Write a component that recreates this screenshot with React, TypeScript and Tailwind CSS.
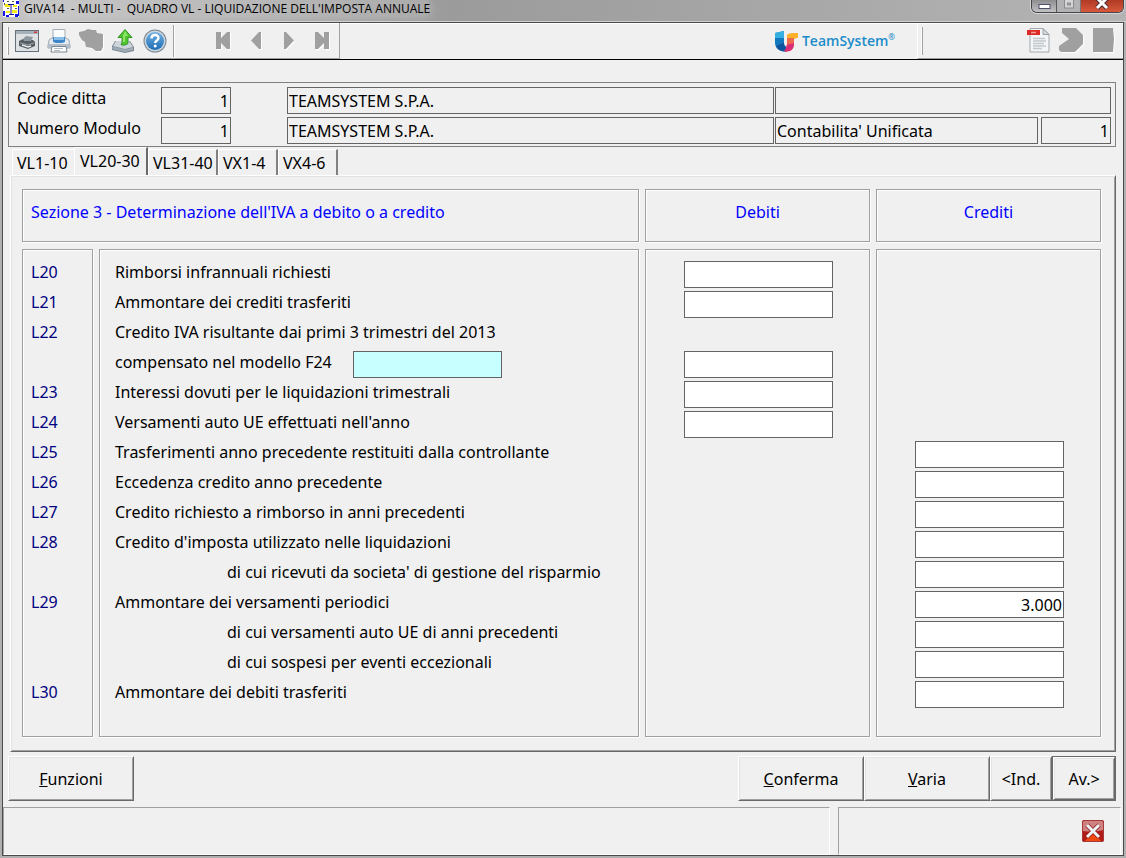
import { useState } from "react";
import type { ReactNode } from "react";

type Row = {
  id: string;
  code?: string;
  text: string;
  indent?: boolean;
  side?: "debiti" | "crediti";
  value?: string;
  extra?: boolean;
};

const rows: Row[] = [
  { id: "l20", code: "L20", text: "Rimborsi infrannuali richiesti", side: "debiti" },
  { id: "l21", code: "L21", text: "Ammontare dei crediti trasferiti", side: "debiti" },
  { id: "l22", code: "L22", text: "Credito IVA risultante dai primi 3 trimestri del 2013" },
  { id: "l22f24", text: "compensato nel modello F24", side: "debiti", extra: true },
  { id: "l23", code: "L23", text: "Interessi dovuti per le liquidazioni trimestrali", side: "debiti" },
  { id: "l24", code: "L24", text: "Versamenti auto UE effettuati nell'anno", side: "debiti" },
  { id: "l25", code: "L25", text: "Trasferimenti anno precedente restituiti dalla controllante", side: "crediti" },
  { id: "l26", code: "L26", text: "Eccedenza credito anno precedente", side: "crediti" },
  { id: "l27", code: "L27", text: "Credito richiesto a rimborso in anni precedenti", side: "crediti" },
  { id: "l28", code: "L28", text: "Credito d'imposta utilizzato nelle liquidazioni", side: "crediti" },
  { id: "l28a", text: "di cui ricevuti da societa' di gestione del risparmio", indent: true, side: "crediti" },
  { id: "l29", code: "L29", text: "Ammontare dei versamenti periodici", side: "crediti", value: "3.000" },
  { id: "l29a", text: "di cui versamenti auto UE di anni precedenti", indent: true, side: "crediti" },
  { id: "l29b", text: "di cui sospesi per eventi eccezionali", indent: true, side: "crediti" },
  { id: "l30", code: "L30", text: "Ammontare dei debiti trasferiti", side: "crediti" },
];

const tabs = [
  { name: "VL1-10", width: "w-[62px]" },
  { name: "VL20-30", width: "w-[74px]" },
  { name: "VL31-40", width: "w-[70px]" },
  { name: "VX1-4", width: "w-[60px]" },
  { name: "VX4-6", width: "w-[60px]" },
];

const box = "border border-[#a0a0a0] shadow-[1px_1px_0_#fff,inset_1px_1px_0_#fff]";
const raised =
  "border border-t-white border-l-white border-r-[#696969] border-b-[#696969] shadow-[inset_1px_1px_0_#e3e3e3,inset_-1px_-1px_0_#a0a0a0]";
const headField = "h-[27px] min-w-0 border border-[#646464] bg-transparent px-px outline-none";
const amount = "h-[27px] w-[149px] border border-[#646464] px-px text-right outline-none";

/* ---------- icons ---------- */

function PreviewIcon() {
  return (
    <svg width="24" height="24" viewBox="0 0 24 24">
      <rect x="0.5" y="1.5" width="23" height="21" fill="#dde1e4" stroke="#66727b" />
      <rect x="1" y="2" width="22" height="3" fill="#a5b1ba" />
      <rect x="19" y="2.500" width="3" height="1.500" fill="#d93a32" />
      <path d="M4 12l4-2 10 1 2 2v4l-7 3-9-3z" fill="#565e63" />
      <path d="M8 10l3-3 7 1-2 4-7 0z" fill="#8d989f" />
      <path d="M5 14l8 2 6-2" stroke="#9aa4aa" strokeWidth="1.200" fill="none" />
      <path d="M7 16l6 2 3-1" stroke="#e4e8ea" strokeWidth="1.400" fill="none" />
    </svg>
  );
}

function PrinterIcon() {
  return (
    <svg width="24" height="24" viewBox="0 0 24 24">
      <path d="M6 .5h12v10H6z" fill="#fafbfc" stroke="#a3adb5" />
      <path d="M2 11l3-2h14l3 2 1 8H1z" fill="#e6eaee" stroke="#9aa5af" />
      <path d="M6 8h12v5l-3 1H9l-3-1z" fill="#3e86cb" />
      <path d="M7 8h10v3H7z" fill="#8abde8" />
      <path d="M.5 15h23v4H.5z" fill="#b5bfc9" />
      <path d="M5 17.500h14l1 5.500H4z" fill="#fff" stroke="#7d8791" />
      <path d="M7 19.500h9M7 21.500h6" stroke="#b4bcc4" />
    </svg>
  );
}

function ExportIcon() {
  return (
    <svg width="24" height="24" viewBox="0 0 24 24">
      <path d="M4 12h15l4 6v4l-9 2-13-3v-4z" fill="#7d8a96" />
      <path d="M5 12h13l4 6-8 2-12-3z" fill="#cdd5da" />
      <path d="M1.500 17.500l12.500 3 8-2v2.500l-8 2-12.500-3z" fill="#9fabb5" />
      <path d="M14 .5l7 8h-4v6c-3 2-5 2-7 1l1-2v-5H7z" fill="#52c62e" stroke="#35942a" />
      <path d="M14 2l3 5h-3v6h-2V7z" fill="#8fe56a" />
    </svg>
  );
}

function HelpIcon() {
  return (
    <svg width="24" height="24" viewBox="0 0 24 24">
      <defs>
        <linearGradient id="help" x2="0" y2="1">
          <stop offset="0" stopColor="#73b2e4" />
          <stop offset="1" stopColor="#1c6cb4" />
        </linearGradient>
      </defs>
      <circle cx="12" cy="12" r="11.500" fill="#7c8791" />
      <circle cx="12" cy="12" r="10.500" fill="#c9d4dd" />
      <circle cx="12" cy="12" r="9" fill="url(#help)" />
      <path d="M8.500 9.500c0-4.500 7-4.500 7-.5 0 2.500-3.300 2.500-3.300 5" stroke="#fff" strokeWidth="2.400" fill="none" />
      <circle cx="12.200" cy="17" r="1.500" fill="#fff" />
    </svg>
  );
}

// grey glyphs of the disabled buttons: white copy behind, moved by one pixel
function Disabled({ d, w = 25, h = 25 }: { d: string; w?: number; h?: number }) {
  return (
    <svg width={w} height={h} viewBox={`0 0 ${w} ${h}`} className="shrink-0">
      <path d={d} fill="#fff" transform="translate(1 1)" />
      <path d={d} fill="#a0a0a0" />
    </svg>
  );
}

function PdfIcon() {
  return (
    <svg width="24" height="25" viewBox="0 0 24 25">
      <path d="M3 .5h13l6 6V24H3z" fill="#f3f5f6" stroke="#a3a9ad" />
      <path d="M16 .5l6 6h-6z" fill="#d3d9dc" stroke="#9aa2a6" />
      <rect x="0" y="2" width="13" height="5" fill="#dd2a24" />
      <path d="M4 4.500h5" stroke="#f29f9a" strokeWidth="1.500" />
      <path d="M6 10.500h12M6 13h13M6 15.500h11M6 18h13M6 20.500h9" stroke="#c1c8cc" strokeWidth="1.300" />
    </svg>
  );
}

function TeamSystemLogo() {
  return (
    <svg width="23" height="21" viewBox="0 0 23 21">
      <path d="M0 2L9 0v11.500c0 2.500 1 4 2.500 4.500v4.500C4 21 0 17 0 11.500z" fill="#1379be" />
      <path d="M0 2L9 0v7H0z" fill="#35aee2" />
      <path d="M1 15c2 4 6 6 10.500 5.500V16C9 15.500 9 13 9 11.500z" fill="#0f559e" />
      <path d="M12 4c2-2 5-2 11-2v4.500l-4 1.500v4h-7z" fill="#fbb12b" />
      <path d="M12 7h7v6c0 4-2.500 7.500-7.500 7.500l-2-.5c2-2 2.500-4 2.500-7z" fill="#ef6a4b" />
      <path d="M11.500 14L19 12c0 5-2 8.500-8 8.500l-2-.5c2-2 2.500-3.500 2.500-6z" fill="#dc2c75" />
    </svg>
  );
}

function AppIcon() {
  return (
    <svg width="16" height="17" viewBox="0 0 16 17">
      <rect width="16" height="17" fill="#fff" />
      <path d="M0 0h1v2H0zM13 1h3v3h-3zM0 11h2v5H0zM15 6h1v10h-1zM3 15h3v2H3zM12 14h3v3h-3z" fill="#1414e6" />
      <path d="M1 4h6v3H2zM9 10h5v3H9zM3 11h4v2H3zM10 5h4v2h-4z" fill="#f5ea1b" />
      <path d="M4 1h2v1H4zM9 1h2v1H9zM1 3h1v2H1zM4 8h2v1H4zM12 8h2v1h-2z" fill="#555" />
      <path d="M5 4.500h6M8 5v9M6 14.500h5" stroke="#14149a" />
    </svg>
  );
}

function CloseIcon() {
  return (
    <svg width="22" height="22" viewBox="0 0 22 22">
      <rect width="22" height="22" rx="2" fill="#b01c1a" />
      <path d="M1 1h20v9c-6 2-14 2-20 1z" fill="#cd8181" />
      <path d="M3 21l8-9 8 9z" fill="#ee4a14" />
      <rect x="0.500" y="0.500" width="21" height="21" rx="2" fill="none" stroke="#a83a3a" />
      <path d="M5 5l12 12M17 5L5 17" stroke="#8b1717" strokeWidth="4.500" />
      <path d="M5 5l12 12M17 5L5 17" stroke="#f1f4f7" strokeWidth="3" />
    </svg>
  );
}

/* ---------- parts ---------- */

function ToolButton({ label, children, disabled }: { label: string; children: ReactNode; disabled?: boolean }) {
  return (
    <button type="button" aria-label={label} disabled={disabled} className="flex h-6 w-6 items-center justify-center">
      {children}
    </button>
  );
}

function TitleBar() {
  return (
    <header className="flex h-[22px] justify-between border-b border-[#d0d0d0] bg-linear-to-r from-[#c2c2c2] via-[#9b9b9b] via-40% to-[#b4b4b4]">
      <div className="flex h-[17px] items-center gap-[5px] pl-[3px]">
        <AppIcon />
        <h1 className="rounded-lg bg-white/15 text-xs leading-[17px] whitespace-pre shadow-[0_0_8px_2px_rgba(255,255,255,0.2)] font-['Open_Sans',sans-serif]">
          {"GIVA14  - MULTI -  QUADRO VL - LIQUIDAZIONE DELL'IMPOSTA ANNUALE"}
        </h1>
      </div>
      <div className="mr-0.5 flex h-[13px] overflow-hidden rounded-b-md border border-t-0 border-[#44464a] shadow-[0_0_0_1px_#d5d5d5]">
        <button type="button" aria-label="Riduci" className="flex w-[25px] justify-center border-r border-[#55575b] bg-linear-to-b from-[#8e8e90] to-[#c2c2c4]">
          <svg width="13" height="12" viewBox="0 0 13 12">
            <rect x="1" y="4.500" width="11" height="4" fill="#fff" stroke="#4c5068" />
          </svg>
        </button>
        <button type="button" aria-label="Ingrandisci" disabled className="flex w-6 justify-center border-r border-[#77797c] bg-[#b2b2b4]">
          <svg width="12" height="12" viewBox="0 0 12 12">
            <rect x="1.500" y="-1" width="9" height="9" fill="#d5d5d5" stroke="#88898c" />
            <rect x="4.500" y="3" width="3" height="2" fill="#aaa" stroke="#88898c" />
          </svg>
        </button>
        <button type="button" aria-label="Chiudi" className="flex w-[42px] justify-center bg-linear-to-b from-[#b03a24] to-[#d8583c]">
          <svg width="14" height="12" viewBox="0 0 14 12">
            <path d="M2-2l10 10M12-2L2 8" stroke="#4c2a34" strokeWidth="5" />
            <path d="M2-2l10 10M12-2L2 8" stroke="#fff" strokeWidth="3" />
          </svg>
        </button>
      </div>
    </header>
  );
}

function Toolbar() {
  return (
    <div className="flex h-[37px] items-stretch border-b border-black shadow-[inset_0_1px_0_#fff]">
      <div className="flex items-center border-r border-b border-r-[#a0a0a0] border-b-[#a0a0a0] pr-1 pl-1">
        <div className="mr-1.5 h-7 w-0.5 border-r border-l border-r-[#a0a0a0] border-l-white" />
        <div className="flex gap-2">
          <ToolButton label="Anteprima"><PreviewIcon /></ToolButton>
          <ToolButton label="Stampa"><PrinterIcon /></ToolButton>
          <ToolButton label="Mappa" disabled>
            <Disabled d="M0 4l5-1 4-2 4 1h4l1 3 6 1v13l-2 4h-5l-4-3-6-1-1-5-3-2-3-5z" />
          </ToolButton>
          <ToolButton label="Esporta"><ExportIcon /></ToolButton>
          <ToolButton label="Aiuto"><HelpIcon /></ToolButton>
        </div>
        <div className="mr-[37px] ml-1.5 h-8 w-0.5 border-r border-l border-r-white border-l-[#a0a0a0]" />
        <div className="flex gap-[9px]">
          <ToolButton label="Primo" disabled><Disabled w={16} h={18} d="M0 0h5v6l6-6h3v17h-3l-6-6v6H0z" /></ToolButton>
          <ToolButton label="Precedente" disabled><Disabled w={12} h={18} d="M0 8.500L8 0h2v17H8z" /></ToolButton>
          <ToolButton label="Successivo" disabled><Disabled w={12} h={18} d="M10 8.500L2 0H0v17h2z" /></ToolButton>
          <ToolButton label="Ultimo" disabled><Disabled w={16} h={18} d="M14 0H9v6L3 0H0v17h3l6-6v6h5z" /></ToolButton>
        </div>
      </div>
      <div className="flex flex-1 items-center justify-end gap-1 pr-[22px] text-[#1b8cc9]">
        <TeamSystemLogo />
        <span className="flex text-sm font-semibold font-['Open_Sans',sans-serif]">
          TeamSystem<sup className="top-0 text-[8px] leading-3">®</sup>
        </span>
      </div>
      <div className="flex items-center border-b border-l border-b-[#a0a0a0] border-l-white pr-2 pl-[3px]">
        <div className="mr-[104px] h-7 w-0.5 border-r border-l border-r-[#a0a0a0] border-l-white" />
        <div className="flex gap-2">
          <ToolButton label="PDF"><PdfIcon /></ToolButton>
          <ToolButton label="Avanti" disabled><Disabled d="M3 0h14l7 7v9l-8 8H2l-2-2v-4l10-7-7-6z" /></ToolButton>
          <ToolButton label="Stop" disabled><Disabled d="M2 0h20l1 11-1 13H2z" /></ToolButton>
        </div>
      </div>
    </div>
  );
}

function CompanyHeader() {
  return (
    <div className="mt-[22px] mr-[7px] ml-[5px] flex flex-col gap-[3px] border border-[#808080] pt-1 pr-1 pb-0.5 pl-2 leading-[22px]">
      <div className="flex items-start">
        <label htmlFor="ditta" className="w-36">Codice ditta</label>
        <input id="ditta" defaultValue="1" className={`${headField} w-[70px] text-right`} />
        <input aria-label="Ragione sociale ditta" defaultValue="TEAMSYSTEM S.P.A." className={`${headField} ml-14 flex-1`} />
        <input aria-label="Note" className={`${headField} ml-px w-[336px]`} />
      </div>
      <div className="flex items-start">
        <label htmlFor="modulo" className="w-36">Numero Modulo</label>
        <input id="modulo" defaultValue="1" className={`${headField} w-[70px] text-right`} />
        <input aria-label="Ragione sociale modulo" defaultValue="TEAMSYSTEM S.P.A." className={`${headField} ml-14 flex-1`} />
        <input aria-label="Contabilita'" defaultValue="Contabilita' Unificata" className={`${headField} ml-px w-[263px]`} />
        <input aria-label="Numero contabilita'" defaultValue="1" className={`${headField} ml-[3px] w-[70px] text-right`} />
      </div>
    </div>
  );
}

function AmountColumn({ side }: { side: "debiti" | "crediti" }) {
  return (
    <div className={`${box} pt-[11px] pb-[25px] pl-[38px]`}>
      {rows.map((row) => (
        <div key={row.id} className="flex h-[30px] items-start">
          {row.side === side && <input id={row.id} defaultValue={row.value} className={`${amount} bg-white`} />}
        </div>
      ))}
    </div>
  );
}

function Section() {
  return (
    <section className={`mr-[7px] ml-[7px] pt-[13px] pr-3.5 pb-3.5 pl-[11px] ${raised}`}>
      <div className="grid grid-cols-[71px_1fr_225px_225px] gap-x-1.5 gap-y-[7px] leading-[22px]">
        <h2 className={`${box} col-span-2 h-[53px] pt-[11px] pl-2 text-[#0000ff]`}>
          Sezione 3 - Determinazione dell'IVA a debito o a credito
        </h2>
        <h2 className={`${box} pt-[11px] text-center text-[#0000ff]`}>Debiti</h2>
        <h2 className={`${box} pt-[11px] text-center text-[#0000ff]`}>Crediti</h2>

        <div className={`${box} pt-[11px] pl-2 text-[#000080]`}>
          {rows.map((row) => (
            <div key={row.id} className="h-[30px]">{row.code}</div>
          ))}
        </div>
        <div className={`${box} pt-[11px] pl-[15px]`}>
          {rows.map((row) => (
            <div key={row.id} className="flex h-[30px] items-start whitespace-nowrap">
              {row.side ? (
                <label htmlFor={row.id} className={row.indent ? "pl-28" : row.extra ? "w-[238px]" : ""}>{row.text}</label>
              ) : (
                <span>{row.text}</span>
              )}
              {row.extra && <input aria-label="Importo compensato F24" className={`${amount} bg-[#c8ffff]`} />}
            </div>
          ))}
        </div>
        <AmountColumn side="debiti" />
        <AmountColumn side="crediti" />
      </div>
    </section>
  );
}

export default function App() {
  const [active, setActive] = useState("VL20-30");

  return (
    <div className="flex min-h-screen flex-col bg-[#b0b0b0] text-base text-black font-['Noto_Sans',sans-serif]">
      <TitleBar />
      <main className="mx-0.5 mb-0.5 flex flex-1 flex-col border border-[#4b4b4b] bg-[#f0f0f0]">
        <Toolbar />
        <CompanyHeader />

        <nav className="flex items-end pl-[9px]">
          {tabs.map((tab) => (
            <button
              key={tab.name}
              type="button"
              onClick={() => setActive(tab.name)}
              className={`${tab.width} border-t border-l border-t-white border-l-white text-left leading-[22px] whitespace-nowrap ${
                tab.name === active
                  ? "h-7 border-r-2 border-r-[#696969] pb-0.5 pl-[5px]"
                  : "h-[26px] border-r-2 border-r-[#808080] pl-1 first:border-r-0"
              }`}
            >
              {tab.name}
            </button>
          ))}
        </nav>
        <Section />

        <div className="mt-1 mr-[7px] ml-[5px] flex h-[45px]">
          <button type="button" className={`w-[126px] ${raised}`}>
            <u>F</u>unzioni
          </button>
          <div className="flex-1" />
          <button type="button" className={`w-[126px] ${raised}`}>
            <u>C</u>onferma
          </button>
          <button type="button" className={`w-[126px] ${raised}`}>
            <u>V</u>aria
          </button>
          <button type="button" className={`w-[62px] ${raised}`}>&lt;Ind.</button>
          <div className="flex w-16 border border-[#696969]">
            <button type="button" className={`flex-1 ${raised}`}>Av.&gt;</button>
          </div>
        </div>

        <footer className="mt-1.5 flex min-h-12 flex-1 gap-2">
          <div className="flex-1 border border-t-[#a0a0a0] border-r-white border-b-white border-l-[#a0a0a0]" />
          <div className="mr-0.5 flex w-[283px] items-center justify-end border border-t-[#a0a0a0] border-r-white border-b-white border-l-[#a0a0a0] pr-4">
            <button type="button" aria-label="Esci">
              <CloseIcon />
            </button>
          </div>
        </footer>
      </main>
    </div>
  );
}
